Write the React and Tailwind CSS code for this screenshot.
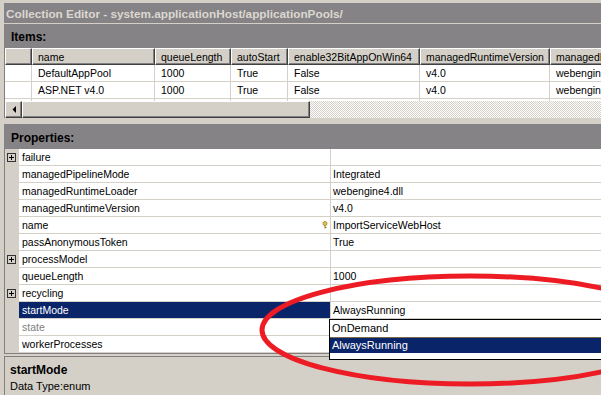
import React from 'react';

const itemCols = [
  { w: 'w-[27px]', label: '' },
  { w: 'w-[123px]', label: 'name' },
  { w: 'w-[76px]', label: 'queueLength' },
  { w: 'w-[57px]', label: 'autoStart' },
  { w: 'w-[132px]', label: 'enable32BitAppOnWin64' },
  { w: 'w-[130px]', label: 'managedRuntimeVersion' },
  { w: 'w-[160px]', label: 'managedPipelineMode' },
];

const itemRows = [
  ['', 'DefaultAppPool', '1000', 'True', 'False', 'v4.0', 'webengine4.dll'],
  ['', 'ASP.NET v4.0', '1000', 'True', 'False', 'v4.0', 'webengine4.dll'],
];

const props = [
  { name: 'failure', value: '', expand: true },
  { name: 'managedPipelineMode', value: 'Integrated' },
  { name: 'managedRuntimeLoader', value: 'webengine4.dll' },
  { name: 'managedRuntimeVersion', value: 'v4.0' },
  { name: 'name', value: 'ImportServiceWebHost', key: true },
  { name: 'passAnonymousToken', value: 'True' },
  { name: 'processModel', value: '', expand: true },
  { name: 'queueLength', value: '1000' },
  { name: 'recycling', value: '', expand: true },
  { name: 'startMode', value: 'AlwaysRunning', selected: true },
  { name: 'state', value: '', disabled: true },
  { name: 'workerProcesses', value: '' },
];

const raised =
  'bg-[#d4d0c8] border-t border-l border-t-white border-l-white border-r border-b border-r-[#404040] border-b-[#404040] shadow-[inset_-1px_-1px_#808080]';

const PlusBox = () => (
  <svg width="9" height="9" viewBox="0 0 9 9" className="block">
    <rect x="0.5" y="0.5" width="8" height="8" fill="none" stroke="#333" />
    <path d="M2 4.5h5M4.5 2v5" stroke="#000" />
  </svg>
);

const KeyIcon = () => (
  <svg width="6" height="8" viewBox="0 0 6 8" className="block">
    <circle cx="3" cy="2.5" r="2" fill="#e8c24a" stroke="#9a7a1a" strokeWidth="0.8" />
    <path d="M3 4.5v3M3 6.5h1.5" stroke="#9a7a1a" strokeWidth="1" />
  </svg>
);

export default function App() {
  return (
    <div className="relative w-[601px] h-[395px] overflow-hidden bg-[#d4d0c8] pt-[3px] pl-[4px] font-['Liberation_Sans',Arial,sans-serif] text-[10.5px] text-black">
      {/* title */}
      <div className="h-[19px] bg-[#858386] flex items-center pl-[2px] pt-[1px] border-b border-[#d4d0c8] box-content">
        <span className="font-bold text-[11.75px] text-[#dcd8d0] whitespace-nowrap">
          Collection Editor - system.applicationHost/applicationPools/
        </span>
      </div>

      {/* items */}
      <div className="h-[24px] bg-[#858386] flex items-center pl-[7px] pt-[1px]">
        <span className="font-bold text-[12px]">Items:</span>
      </div>
      <div className="border-l border-[#808080] w-[700px]">
        <div className="flex h-[17px]">
          {itemCols.map((c, i) => (
            <div key={i} className={`${c.w} shrink-0 ${raised} pl-[5px] leading-[16px] whitespace-nowrap overflow-hidden`}>
              {c.label}
            </div>
          ))}
        </div>
        {itemRows.map((r, ri) => (
          <div key={ri} className="flex h-[17px] bg-white">
            {r.map((v, i) => (
              <div key={i} className={`${itemCols[i].w} shrink-0 border-r border-b border-[#d4d0c8] pl-[6px] leading-[17px] whitespace-nowrap overflow-hidden`}>
                {v}
              </div>
            ))}
          </div>
        ))}
        <div className="flex h-[2px] bg-white">
          {itemCols.map((c, i) => (
            <div key={i} className={`${c.w} shrink-0 border-r border-[#d4d0c8]`} />
          ))}
        </div>
        <div className="flex h-[17px]">
          <div className={`w-[17px] shrink-0 ${raised} flex items-center justify-center`}>
            <svg width="4" height="7" viewBox="0 0 4 7">
              <path d="M4 0L0.5 3.5L4 7Z" fill="#000" />
            </svg>
          </div>
          <div className={`w-[288px] shrink-0 ${raised}`} />
          <div className="flex-1 bg-[repeating-conic-gradient(#d4d0c8_0_25%,#ffffff_0_50%)] bg-[length:2px_2px]" />
        </div>
      </div>

      {/* properties */}
      <div className="h-[25px] mt-[6px] bg-[#858386] flex items-center pl-[7px] pt-[2px]">
        <span className="font-bold text-[12px]">Properties:</span>
      </div>
      <div className="border-l border-b border-[#808080]">
        {props.map((p) => (
          <div key={p.name} className="flex h-[17px]">
            <div className="w-[14px] shrink-0 bg-[#d4d0c8] flex items-center pl-[2px]">
              {p.expand && <PlusBox />}
            </div>
            <div
              className={`w-[311px] shrink-0 border-b border-[#d4d0c8] pl-[3px] leading-[17px] whitespace-nowrap ${
                p.selected ? 'bg-[#0a246a] text-white' : 'bg-white'
              } ${p.disabled ? 'text-[#808080]' : ''}`}
            >
              {p.name}
            </div>
            <div className="flex-1 bg-white border-b border-l border-[#d4d0c8] leading-[17px] whitespace-nowrap relative pl-[2px]">
              {p.key && (
                <span className="absolute left-[-9px] top-[4px]">
                  <KeyIcon />
                </span>
              )}
              {p.value}
            </div>
          </div>
        ))}
      </div>

      {/* description */}
      <div className="mt-[2px] border-t border-l border-[#808080] h-[40px] pl-[5px] pt-[6px]">
        <div className="font-bold text-[12px] leading-[15px]">startMode</div>
        <div className="text-[11px] leading-[16px]">Data Type:enum</div>
      </div>

      {/* dropdown */}
      <div className="absolute left-[329px] top-[319px] w-[290px] h-[41px] bg-white border border-black">
        <div className="h-[17px] pl-[2px] leading-[17px] text-[11px]">OnDemand</div>
        <div className="h-[16px] pl-[2px] leading-[15px] text-[11px] bg-[#0a246a] text-white border-t border-[#7a6a48]">AlwaysRunning</div>
      </div>

      {/* annotation */}
      <svg className="absolute inset-0 pointer-events-none" width="601" height="395">
        <ellipse cx="470" cy="330" rx="208" ry="54" fill="none" stroke="#ed1c24" strokeWidth="5" />
      </svg>
    </div>
  );
}
